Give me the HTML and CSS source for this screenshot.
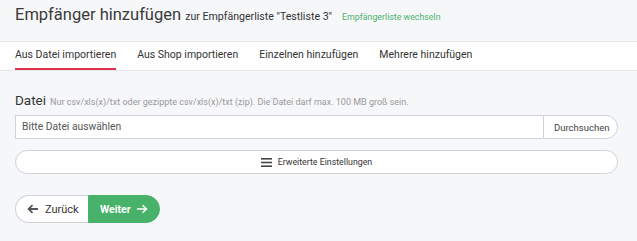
FILE: index.html
```html
<!DOCTYPE html>
<html lang="de">
<head>
<meta charset="utf-8">
<title>Empfänger hinzufügen</title>
<link rel="stylesheet" href="styles.css">
</head>
<body>
<header class="head">
  <h1 class="title">Empfänger hinzufügen <span class="sub">zur Empfängerliste "Testliste 3"</span> <a class="switch" href="#">Empfängerliste wechseln</a></h1>
</header>
<nav class="tabs">
  <a class="tab active" href="#">Aus Datei importieren</a>
  <a class="tab" href="#">Aus Shop importieren</a>
  <a class="tab" href="#">Einzelnen hinzufügen</a>
  <a class="tab" href="#">Mehrere hinzufügen</a>
</nav>
<main class="content">
  <div class="label-row"><span class="label">Datei</span> <span class="hint">Nur csv/xls(x)/txt oder gezippte csv/xls(x)/txt (zip). Die Datei darf max. 100 MB groß sein.</span></div>
  <div class="file">
    <div class="file-input">Bitte Datei auswählen</div>
    <button class="browse">Durchsuchen</button>
  </div>
  <button class="advanced">
    <svg class="menu-ico" width="11" height="9" viewBox="0 0 11 9"><rect x="0" y="0" width="11" height="1.6" fill="#444"/><rect x="0" y="3.7" width="11" height="1.6" fill="#444"/><rect x="0" y="7.4" width="11" height="1.6" fill="#444"/></svg>
    Erweiterte Einstellungen
  </button>
  <div class="nav-buttons">
    <button class="btn back"><svg width="12" height="10" viewBox="0 0 12 10"><path d="M11 5H2M5.5 1.2L1.6 5l3.9 3.8" fill="none" stroke="#555" stroke-width="1.8"/></svg>Zurück</button>
    <button class="btn next">Weiter<svg width="12" height="10" viewBox="0 0 12 10"><path d="M1 5h9M6.5 1.2L10.4 5 6.5 8.8" fill="none" stroke="#fff" stroke-width="1.6"/></svg></button>
  </div>
</main>
</body>
</html>
```
FILE: styles.css
```css
* { box-sizing: border-box; }
html, body { margin: 0; padding: 0; }
body {
  font-family: Roboto, "Liberation Sans", sans-serif;
  background: #f6f7f9;
  color: #333;
  width: 637px;
  height: 241px;
  overflow: hidden;
}
.head {
  height: 42px;
  padding: 4px 15px 0;
  border-bottom: 1px solid #e3e5e8;
}
.title {
  margin: 0;
  font-size: 16.5px;
  font-weight: 400;
  color: #3a3a3a;
  line-height: 22px;
  white-space: nowrap;
}
.sub {
  font-size: 10.6px;
  color: #333;
}
.switch {
  font-size: 8.8px;
  color: #4cb26b;
  text-decoration: none;
  margin-left: 6px;
}
.tabs {
  display: flex;
  gap: 21px;
  background: #fff;
  height: 29px;
  padding: 0 15px;
  border-bottom: 1px solid #e3e5e8;
}
.tab {
  font-size: 10.5px;
  color: #333;
  text-decoration: none;
  line-height: 26px;
  height: 28px;
  border-bottom: 2px solid transparent;
}
.tab.active { border-bottom-color: #e0304e; }
.content {
  padding: 21px 15px 0 15px;
}
.label-row {
  height: 23px;
  display: flex;
  align-items: baseline;
  gap: 4px;
  white-space: nowrap;
}
.label {
  font-size: 13.5px;
  font-weight: 400;
  color: #333;
}
.hint {
  font-size: 9px;
  color: #999;
}
.file {
  display: flex;
  width: 603px;
  height: 24px;
}
.file-input {
  flex: 1;
  border: 1px solid #cfd2d6;
  border-right: none;
  background: #fff;
  font-size: 10.3px;
  color: #555;
  padding-left: 6px;
  line-height: 22px;
  border-radius: 1px 0 0 1px;
}
.browse {
  width: 75px;
  border: 1px solid #cfd2d6;
  background: #fff;
  border-radius: 0 12px 12px 0;
  font-family: inherit;
  font-size: 9.5px;
  color: #444;
  text-align: left;
  padding: 0 0 0 10px;
}
.advanced {
  display: flex;
  align-items: center;
  justify-content: center;
  gap: 6px;
  width: 603px;
  height: 24px;
  margin-top: 11px;
  border: 1px solid #cfd2d6;
  background: #fff;
  border-radius: 12px;
  font-family: inherit;
  font-size: 8.8px;
  color: #333;
  padding: 0;
}
.menu-ico { display: block; }
.nav-buttons {
  display: flex;
  margin-top: 21px;
}
.btn {
  display: flex;
  align-items: center;
  height: 28px;
  font-family: inherit;
  font-size: 11px;
  padding: 0;
}
.back {
  width: 73px;
  background: #fff;
  border: 1px solid #cfd2d6;
  border-right: none;
  border-radius: 14px 0 0 14px;
  color: #333;
  padding-left: 11px;
  gap: 6px;
}
.next {
  width: 72px;
  background: #48b26a;
  border: 1px solid #48b26a;
  border-radius: 0 14px 14px 0;
  color: #fff;
  font-weight: 700;
  font-size: 10.5px;
  padding-left: 11px;
  gap: 5px;
}
```
